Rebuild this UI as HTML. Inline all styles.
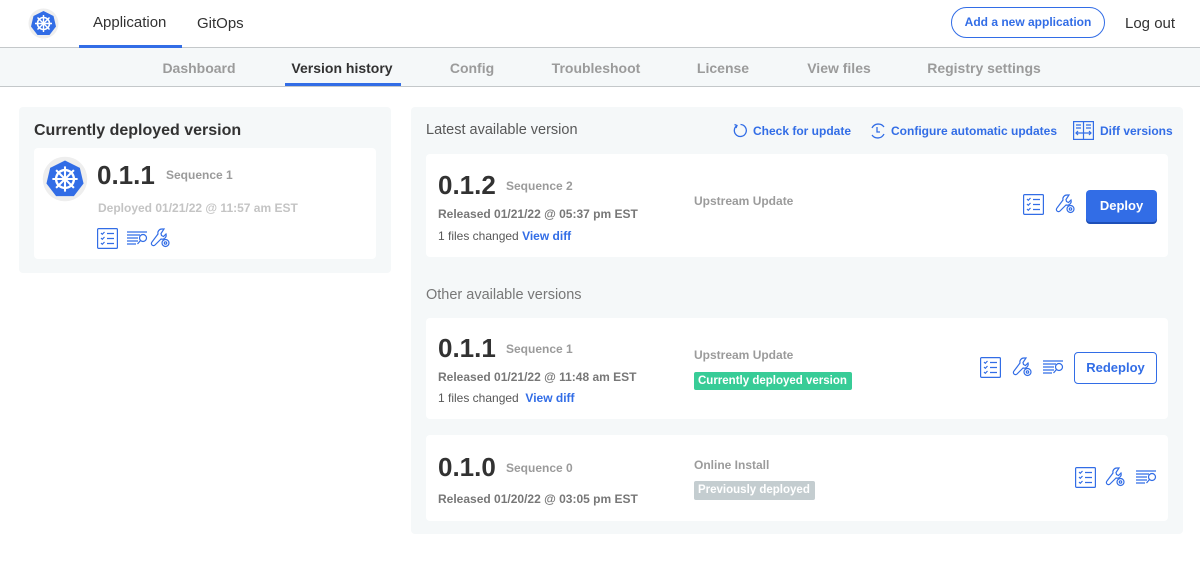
<!DOCTYPE html>
<html><head><meta charset="utf-8"><style>
*{box-sizing:border-box;margin:0;padding:0}
body{width:1200px;height:564px;background:#fff;font-family:"Liberation Sans",Arial,sans-serif;position:relative;overflow:hidden;color:#323232}
.a{position:absolute;white-space:nowrap}
.hdr{left:0;top:0;width:1200px;height:48px;border-bottom:1px solid #c4c8ca;background:#fff}
.sub{left:0;top:48px;width:1200px;height:39px;background:#f5f8f9;border-bottom:1px solid #c4c8ca}
.tab{position:absolute;top:12px;font-size:14px;color:#9b9b9b;font-weight:bold;transform:translateX(-50%);white-space:nowrap}
.panel{background:#f5f8f9;border-radius:4px}
.card{background:#fff;border-radius:4px}
.ver{font-size:26px;font-weight:bold;color:#323232}
.seq{font-size:12px;font-weight:bold;color:#9b9b9b}
.rel{font-size:12px;font-weight:bold;color:#777}
.blue{color:#326de6}
.lbl{font-size:12px;font-weight:bold;color:#9b9b9b}
svg{position:absolute}
</style></head><body>
<div class="a hdr"></div>
<svg style="left:28px;top:8px" width="31" height="31" viewBox="0 0 31 31"><circle cx="15.5" cy="15.5" r="15" fill="#eee"/><polygon points="15.5,3 25.5,8 28,18.5 21.5,27 9.5,27 3,18.5 5.5,8" fill="#326de6"/><circle cx="15.5" cy="15.5" r="6" fill="none" stroke="#fff" stroke-width="1.6"/><g stroke="#fff" stroke-width="1.4"><line x1="15.5" y1="7" x2="15.5" y2="24"/><line x1="7" y1="15.5" x2="24" y2="15.5"/><line x1="9.5" y1="9.5" x2="21.5" y2="21.5"/><line x1="21.5" y1="9.5" x2="9.5" y2="21.5"/></g></svg>
<div class="a" style="left:93px;top:14px;font-size:15px;color:#323232">Application</div>
<div class="a" style="left:79px;top:45px;width:103px;height:3px;background:#326de6"></div>
<div class="a" style="left:197px;top:15px;font-size:15px;color:#323232">GitOps</div>
<div class="a" style="left:951px;top:7px;width:154px;height:31px;border:1px solid #326de6;border-radius:16px;color:#326de6;font-size:12px;font-weight:bold;text-align:center;line-height:29px">Add a new application</div>
<div class="a" style="left:1125px;top:15px;font-size:15px;color:#323232">Log out</div>

<div class="a sub">
<div class="tab" style="left:199px">Dashboard</div>
<div class="tab" style="left:342px;color:#323232">Version history</div>
<div class="a" style="left:285px;top:35px;width:116px;height:3px;background:#326de6"></div>
<div class="tab" style="left:472px">Config</div>
<div class="tab" style="left:596px">Troubleshoot</div>
<div class="tab" style="left:723px">License</div>
<div class="tab" style="left:839px">View files</div>
<div class="tab" style="left:984px">Registry settings</div>
</div>

<div class="a panel" style="left:19px;top:107px;width:372px;height:166px"></div>
<div class="a" style="left:34px;top:122px;font-size:16px;font-weight:bold">Currently deployed version</div>
<div class="a card" style="left:34px;top:148px;width:342px;height:111px"></div>
<svg style="left:42px;top:156px" width="46" height="46" viewBox="0 0 31 31"><circle cx="15.5" cy="15.5" r="15" fill="#eee"/><polygon points="15.5,3 25.5,8 28,18.5 21.5,27 9.5,27 3,18.5 5.5,8" fill="#326de6"/><circle cx="15.5" cy="15.5" r="6" fill="none" stroke="#fff" stroke-width="1.6"/><g stroke="#fff" stroke-width="1.4"><line x1="15.5" y1="7" x2="15.5" y2="24"/><line x1="7" y1="15.5" x2="24" y2="15.5"/><line x1="9.5" y1="9.5" x2="21.5" y2="21.5"/><line x1="21.5" y1="9.5" x2="9.5" y2="21.5"/></g></svg>
<div class="a ver" style="left:97px;top:160px">0.1.1</div>
<div class="a seq" style="left:166px;top:168px">Sequence 1</div>
<div class="a lbl" style="left:98px;top:201px;color:#c4c4c4">Deployed 01/21/22 @ 11:57 am EST</div>

<div class="a panel" style="left:411px;top:107px;width:772px;height:427px"></div>
<div class="a" style="left:426px;top:122px;font-size:14.5px;color:#585858">Latest available version</div>
<div class="a blue" style="left:753px;top:124px;font-size:12px;font-weight:bold">Check for update</div>
<svg style="left:732px;top:122px" width="17" height="17" viewBox="0 0 17 17" fill="none" stroke="#326de6" stroke-width="1.3"><path d="M5 3.5A6 6 0 1 0 8.5 2.5"/><path d="M2.5 2.5L5 3.5 4 6"/></svg>
<div class="a blue" style="left:891px;top:124px;font-size:12px;font-weight:bold">Configure automatic updates</div>
<svg style="left:869px;top:122px" width="18" height="18" viewBox="0 0 18 18" fill="none" stroke="#326de6" stroke-width="1.3"><path d="M3 6A7 7 0 0 1 15 5"/><path d="M15 12A7 7 0 0 1 3 13"/><path d="M8 5v5h3"/></svg>
<div class="a blue" style="left:1100px;top:124px;font-size:12px;font-weight:bold">Diff versions</div>
<svg style="left:1073px;top:121px" width="21" height="19" viewBox="0 0 21 19" fill="none" stroke="#326de6" stroke-width="1.2"><rect x="0.6" y="0.6" width="19.8" height="17.8"/><line x1="10.5" y1="1" x2="10.5" y2="18"/><path d="M3 4h5M3 7h5M13 4h5M13 7h5M3 12h15M5 10l-2 2 2 2M16 10l2 2-2 2"/></svg>

<div class="a card" style="left:426px;top:154px;width:742px;height:103px"></div>
<div class="a ver" style="left:438px;top:170px">0.1.2</div>
<div class="a seq" style="left:506px;top:179px">Sequence 2</div>
<div class="a rel" style="left:438px;top:207px">Released 01/21/22 @ 05:37 pm EST</div>
<div class="a" style="left:438px;top:229px;font-size:12px;color:#585858">1 files changed <span class="blue" style="font-weight:bold">View diff</span></div>
<div class="a lbl" style="left:694px;top:194px">Upstream Update</div>
<div class="a" style="left:1086px;top:190px;width:71px;height:32px;background:#326de6;border-radius:4px;color:#fff;font-size:13px;font-weight:bold;text-align:center;line-height:31px;box-shadow:0 2px 0 #1e4fb8">Deploy</div>

<div class="a" style="left:426px;top:287px;font-size:14.5px;color:#777">Other available versions</div>

<div class="a card" style="left:426px;top:318px;width:742px;height:101px"></div>
<div class="a ver" style="left:438px;top:333px">0.1.1</div>
<div class="a seq" style="left:506px;top:342px">Sequence 1</div>
<div class="a rel" style="left:438px;top:370px">Released 01/21/22 @ 11:48 am EST</div>
<div class="a" style="left:438px;top:391px;font-size:12px;color:#585858">1 files changed &nbsp;<span class="blue" style="font-weight:bold">View diff</span></div>
<div class="a lbl" style="left:694px;top:348px">Upstream Update</div>
<div class="a" style="left:694px;top:372px;width:158px;height:18px;background:#38cc97;border-radius:2px;color:#fff;font-size:11.5px;font-weight:bold;line-height:18px;padding-left:4px;overflow:hidden">Currently deployed version</div>
<div class="a" style="left:1074px;top:352px;width:83px;height:32px;border:1px solid #326de6;border-radius:4px;color:#326de6;font-size:13px;font-weight:bold;text-align:center;line-height:30px">Redeploy</div>

<div class="a card" style="left:426px;top:435px;width:742px;height:86px"></div>
<div class="a ver" style="left:438px;top:452px">0.1.0</div>
<div class="a seq" style="left:506px;top:461px">Sequence 0</div>
<div class="a rel" style="left:438px;top:492px">Released 01/20/22 @ 03:05 pm EST</div>
<div class="a lbl" style="left:694px;top:458px">Online Install</div>
<div class="a" style="left:694px;top:481px;width:121px;height:19px;background:#c4cdd0;border-radius:2px;color:#fff;font-size:11.5px;font-weight:bold;line-height:19px;padding-left:4px;overflow:hidden">Previously deployed</div>

<svg width="0" height="0" style="position:absolute"><defs>
<g id="chk" fill="none" stroke="#326de6" stroke-width="1.2"><rect x="0.6" y="0.6" width="19.8" height="19.8" rx="1"/><path d="M4 5l1.3 1.3L7.5 4M4 10l1.3 1.3L7.5 9M4 15l1.3 1.3L7.5 14M10 5.5h7M10 10.5h7M10 15.5h7"/></g>
<g id="wr" fill="none" stroke="#326de6" stroke-width="1.2"><path d="M12 2a4 4 0 0 0-4 5L2 15a2 2 0 0 0 3 3l6-6a4 4 0 0 0 5-5l-2.5 2.5-2-1-0.5-2L14 2z"/><circle cx="15.5" cy="16" r="3.5"/><circle cx="15.5" cy="16" r="1.2"/></g>
<g id="lg" fill="none" stroke="#326de6" stroke-width="1.2"><path d="M0 2h20M0 5h13M0 8h11M0 11h11M0 14h9"/><circle cx="16" cy="8" r="3.5"/><path d="M13.5 10.5l-3 3.5"/></g>
</defs></svg>
<svg style="left:97px;top:228px" width="21" height="21"><use href="#chk"/></svg>
<svg style="left:127px;top:230px" width="22" height="16"><use href="#lg"/></svg>
<svg style="left:150px;top:227px" width="21" height="22"><use href="#wr"/></svg>

<svg style="left:1023px;top:194px" width="21" height="21"><use href="#chk"/></svg>
<svg style="left:1055px;top:193px" width="21" height="22"><use href="#wr"/></svg>

<svg style="left:980px;top:357px" width="21" height="21"><use href="#chk"/></svg>
<svg style="left:1012px;top:356px" width="21" height="22"><use href="#wr"/></svg>
<svg style="left:1043px;top:359px" width="22" height="16"><use href="#lg"/></svg>

<svg style="left:1075px;top:467px" width="21" height="21"><use href="#chk"/></svg>
<svg style="left:1105px;top:466px" width="21" height="22"><use href="#wr"/></svg>
<svg style="left:1136px;top:469px" width="22" height="16"><use href="#lg"/></svg>
</body></html>
